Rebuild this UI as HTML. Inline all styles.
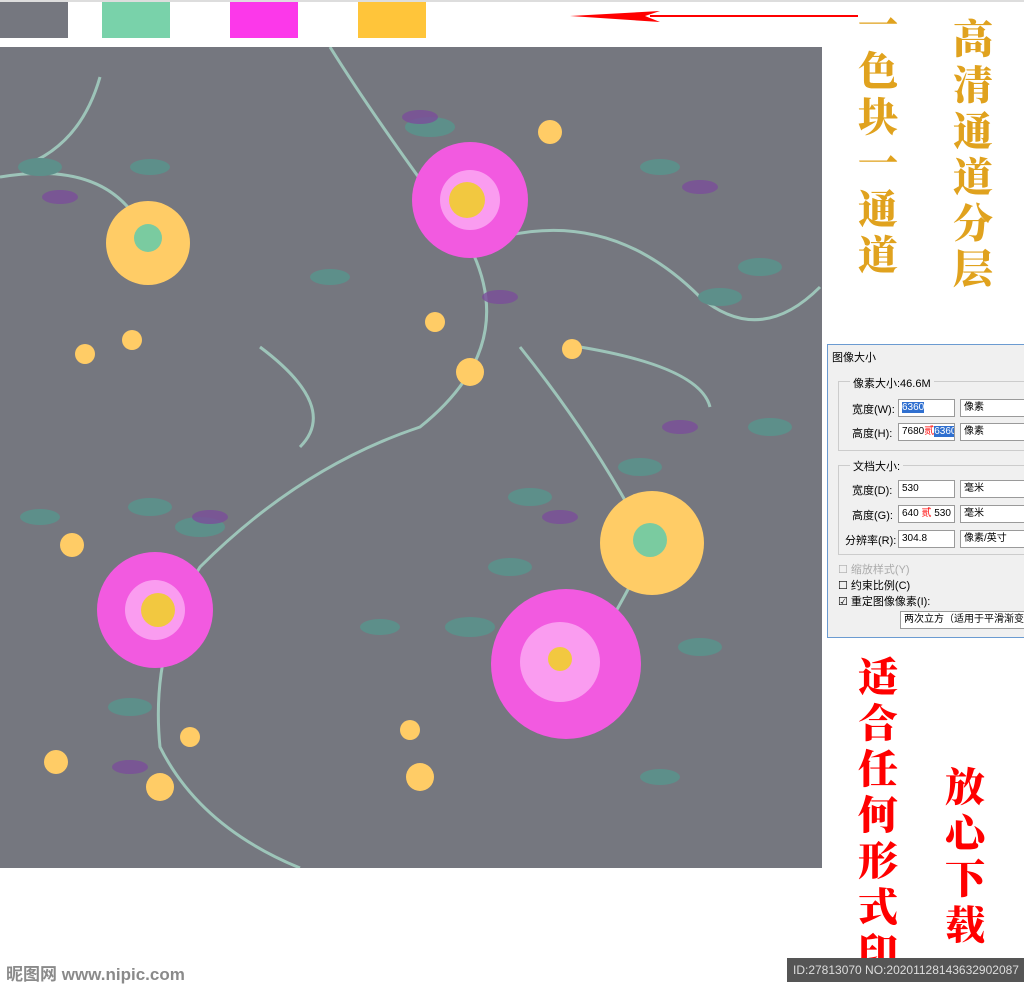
<!DOCTYPE html>
<html><head><meta charset="utf-8"><style>
body{margin:0;width:1024px;height:989px;background:#fff;position:relative;overflow:hidden;font-family:"Liberation Sans","Noto Sans CJK SC",sans-serif}
.a{position:absolute}
.vt{position:absolute;width:50px;text-align:center;font-family:"Noto Serif CJK SC","Noto Sans CJK SC",serif;font-weight:900;font-size:40px;line-height:46px}
.dlg{left:827px;top:344px;width:200px;height:292px;background:#f0f0f0;border:1px solid #6b9bd1;font-size:11px;color:#000}
.box{position:absolute;background:#fff;border:1px solid #9a9a9a;height:18px;font-size:10px;line-height:16px;padding-left:3px;box-sizing:border-box;white-space:nowrap;overflow:hidden}
.lbl{position:absolute;font-size:11px;white-space:nowrap}
</style></head><body>
<div class="a" style="left:0;top:0;width:1024px;height:2px;background:#ddd"></div>
<div class="a" style="left:0;top:2px;width:68px;height:36px;background:#75777f"></div>
<div class="a" style="left:102px;top:2px;width:68px;height:36px;background:#79d2aa"></div>
<div class="a" style="left:230px;top:2px;width:68px;height:36px;background:#fc38ea"></div>
<div class="a" style="left:358px;top:2px;width:68px;height:36px;background:#ffc53a"></div>
<svg class="a" style="left:560px;top:5px" width="300" height="22"><path d="M10 11 L100 6 L85 11 L100 17 Z" fill="#f00"/><line x1="90" y1="11" x2="298" y2="11" stroke="#f00" stroke-width="2"/></svg>
<svg class="a" style="left:0;top:47px" width="822" height="821">
<rect width="822" height="821" fill="#75777f"/>
<g fill="none" stroke="#a8d8c8" stroke-width="3" opacity=".8">
<path d="M0 130 Q120 110 150 200 M330 0 Q380 80 470 200 Q520 300 420 380 Q300 420 200 520 Q150 600 160 700 Q200 780 300 821"/>
<path d="M470 200 Q600 150 700 250 Q760 300 820 240 M520 300 Q600 400 650 500 Q600 600 560 650"/>
<path d="M100 30 Q80 100 20 120 M260 300 Q340 360 300 400 M580 300 Q700 320 710 360"/>
</g>
<g fill="#5d8f8a">
<ellipse cx="40" cy="120" rx="22" ry="9"/><ellipse cx="150" cy="120" rx="20" ry="8"/><ellipse cx="430" cy="80" rx="25" ry="10"/><ellipse cx="480" cy="110" rx="22" ry="9"/><ellipse cx="660" cy="120" rx="20" ry="8"/><ellipse cx="760" cy="220" rx="22" ry="9"/><ellipse cx="720" cy="250" rx="22" ry="9"/><ellipse cx="150" cy="460" rx="22" ry="9"/><ellipse cx="200" cy="480" rx="25" ry="10"/><ellipse cx="530" cy="450" rx="22" ry="9"/><ellipse cx="510" cy="520" rx="22" ry="9"/><ellipse cx="700" cy="600" rx="22" ry="9"/><ellipse cx="640" cy="420" rx="22" ry="9"/><ellipse cx="770" cy="380" rx="22" ry="9"/><ellipse cx="470" cy="580" rx="25" ry="10"/><ellipse cx="130" cy="660" rx="22" ry="9"/><ellipse cx="380" cy="580" rx="20" ry="8"/><ellipse cx="660" cy="730" rx="20" ry="8"/><ellipse cx="330" cy="230" rx="20" ry="8"/><ellipse cx="40" cy="470" rx="20" ry="8"/>
</g>
<g fill="#7a4d9a" opacity=".8">
<ellipse cx="60" cy="150" rx="18" ry="7"/><ellipse cx="420" cy="70" rx="18" ry="7"/><ellipse cx="700" cy="140" rx="18" ry="7"/><ellipse cx="210" cy="470" rx="18" ry="7"/><ellipse cx="560" cy="470" rx="18" ry="7"/><ellipse cx="680" cy="380" rx="18" ry="7"/><ellipse cx="130" cy="720" rx="18" ry="7"/><ellipse cx="500" cy="250" rx="18" ry="7"/>
</g>
<g fill="#ffcc66">
<circle cx="148" cy="196" r="42"/><circle cx="652" cy="496" r="52"/>
<circle cx="85" cy="307" r="10"/><circle cx="132" cy="293" r="10"/><circle cx="435" cy="275" r="10"/><circle cx="470" cy="325" r="14"/><circle cx="572" cy="302" r="10"/><circle cx="550" cy="85" r="12"/><circle cx="72" cy="498" r="12"/><circle cx="56" cy="715" r="12"/><circle cx="160" cy="740" r="14"/><circle cx="190" cy="690" r="10"/><circle cx="420" cy="730" r="14"/><circle cx="410" cy="683" r="10"/>
</g>
<circle cx="148" cy="191" r="14" fill="#7acba0"/><circle cx="650" cy="493" r="17" fill="#7acba0"/>
<g fill="#f25ae0"><circle cx="470" cy="153" r="58"/><circle cx="155" cy="563" r="58"/><circle cx="566" cy="617" r="75"/></g>
<g fill="#fa9cf0"><circle cx="470" cy="153" r="30"/><circle cx="155" cy="563" r="30"/><circle cx="560" cy="615" r="40"/></g>
<g fill="#f2c840"><circle cx="467" cy="153" r="18"/><circle cx="158" cy="563" r="17"/><circle cx="560" cy="612" r="12"/></g>
</svg>
<div class="vt" style="left:853px;top:0;color:#e0a21e">一<br>色<br>块<br>一<br>通<br>道</div>
<div class="vt" style="left:948px;top:14px;color:#e0a21e">高<br>清<br>通<br>道<br>分<br>层</div>
<div class="vt" style="left:853px;top:652px;color:#f00">适<br>合<br>任<br>何<br>形<br>式<br>印</div>
<div class="vt" style="left:940px;top:762px;color:#f00">放<br>心<br>下<br>载</div>
<div class="a dlg">
<div class="lbl" style="left:4px;top:4px">图像大小</div>
<div class="a" style="left:10px;top:36px;width:190px;height:68px;border:1px solid #ccc;border-right:none"></div>
<div class="lbl" style="left:22px;top:30px;background:#f0f0f0;padding:0 3px">像素大小:46.6M</div>
<div class="lbl" style="left:24px;top:56px">宽度(W):</div><div class="box" style="left:70px;top:54px;width:57px"><span style="background:#3070d0;color:#fff">6360</span></div><div class="box" style="left:132px;top:54px;width:70px">像素</div>
<div class="lbl" style="left:24px;top:80px">高度(H):</div><div class="box" style="left:70px;top:78px;width:57px">7680<span style="color:red">贰</span><span style="background:#3070d0;color:#fff">6360</span></div><div class="box" style="left:132px;top:78px;width:70px">像素</div>
<div class="a" style="left:10px;top:120px;width:190px;height:88px;border:1px solid #ccc;border-right:none"></div>
<div class="lbl" style="left:22px;top:113px;background:#f0f0f0;padding:0 3px">文档大小:</div>
<div class="lbl" style="left:24px;top:137px">宽度(D):</div><div class="box" style="left:70px;top:135px;width:57px">530</div><div class="box" style="left:132px;top:135px;width:70px">毫米</div>
<div class="lbl" style="left:24px;top:162px">高度(G):</div><div class="box" style="left:70px;top:160px;width:57px">640 <span style="color:red">贰</span> 530</div><div class="box" style="left:132px;top:160px;width:70px">毫米</div>
<div class="lbl" style="left:17px;top:187px">分辨率(R):</div><div class="box" style="left:70px;top:185px;width:57px">304.8</div><div class="box" style="left:132px;top:185px;width:70px">像素/英寸</div>
<div class="lbl" style="left:10px;top:216px;color:#aaa">☐ 缩放样式(Y)</div>
<div class="lbl" style="left:10px;top:232px">☐ 约束比例(C)</div>
<div class="lbl" style="left:10px;top:248px">☑ 重定图像像素(I):</div>
<div class="box" style="left:72px;top:266px;width:130px">两次立方（适用于平滑渐变</div>
</div>
<div class="a" style="left:6px;top:960px;font-size:17px;color:#8a8a8a;font-weight:bold">昵图网 www.nipic.com</div>
<div class="a" style="left:787px;top:958px;width:237px;height:24px;background:#555;color:#ddd;font-size:12px;line-height:24px;padding-left:6px;box-sizing:border-box;white-space:nowrap">ID:27813070 NO:20201128143632902087</div>
</body></html>
